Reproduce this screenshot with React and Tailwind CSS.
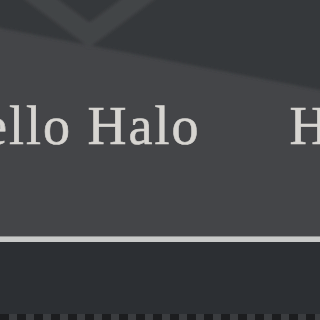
import React from "react";

export default function App() {
  return (
    <div className="w-[320px] h-[320px] overflow-hidden flex flex-col bg-[#2c2f33]">
      <div className="relative h-[236px] bg-[#444548] overflow-hidden">
        <svg className="absolute inset-0" width="320" height="236" viewBox="0 0 320 236">
          <defs>
            <filter id="b" x="-10%" y="-10%" width="120%" height="120%">
              <feGaussianBlur stdDeviation="1.5" />
            </filter>
          </defs>
          <g filter="url(#b)">
            <polygon points="-10,-10 330,-10 330,92 0,28 -10,26" fill="#36373b" />
            <polyline points="26,-12 89.5,35 153,-12" fill="none" stroke="#434447" strokeWidth="20" strokeLinejoin="miter" />
          </g>
        </svg>
        <div
          className="relative flex flex-row whitespace-nowrap pt-[99px] ml-[-58px] gap-[89px] text-[54px] leading-[54px] tracking-[2px] text-[#d7d5d1] [-webkit-text-stroke:0.6px_#d7d5d1]"
          style={{ fontFamily: '"Liberation Serif", "Times New Roman", serif' }}
        >
          <span>Hello Halo</span>
          <span>Hello Halo</span>
        </div>
      </div>
      <div className="h-[6px] bg-[#c8c9c8] border-t border-[#909191]" />
      <div className="h-[72px] bg-[#2c2f33]" />
      <div className="h-[6px] bg-[repeating-linear-gradient(90deg,#1c1d1f_0px,#1c1d1f_9px,#3a3c3f_9px,#3a3c3f_17px)]" />
    </div>
  );
}
